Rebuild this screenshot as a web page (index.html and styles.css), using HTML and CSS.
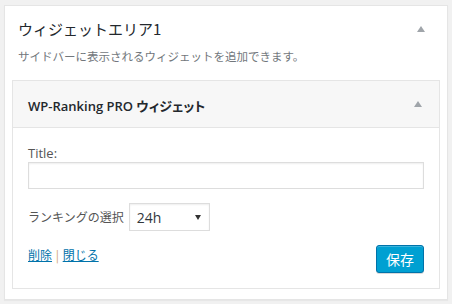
FILE: index.html
```html
<!DOCTYPE html>
<html lang="ja">
<head>
    <meta charset="UTF-8">
    <title>widget</title>
    <link rel="stylesheet" href="styles.css">
</head>
<body>
    <div class="sidebar">
        <div class="sidebar-head">
            <h2>ウィジェットエリア1</h2>
            <span class="toggle"></span>
        </div>
        <p class="sidebar-desc">サイドバーに表示されるウィジェットを追加できます。</p>

        <div class="widget">
            <div class="widget-top">
                <h3>WP-Ranking PRO ウィジェット</h3>
                <span class="toggle"></span>
            </div>
            <div class="widget-inside">
                <label class="field-label" for="title">Title:</label>
                <input type="text" id="title" class="text-input">
                <div class="select-row">
                    <span>ランキングの選択</span>
                    <div class="select">
                        <span>24h</span>
                        <span class="select-arrow"></span>
                    </div>
                </div>
                <div class="actions">
                    <div class="links">
                        <a href="#">削除</a>
                        <span class="sep">|</span>
                        <a href="#">閉じる</a>
                    </div>
                    <button class="save">保存</button>
                </div>
            </div>
        </div>
    </div>
</body>
</html>
```

FILE: styles.css
```css
body {
    margin: 0;
    padding: 5px 4px;
    background-color: #f1f1f1;
    font-family: "Open Sans", "Noto Sans CJK JP", sans-serif;
    color: #444;
    font-size: 13px;
}
.sidebar {
    background-color: #fff;
    border: 1px solid #e5e5e5;
    box-shadow: 0 1px 1px rgba(0, 0, 0, 0.04);
    padding: 11px 7px 10px;
}
.sidebar-head {
    display: flex;
    justify-content: space-between;
    align-items: center;
    padding: 0 15px 0 6px;
}
.sidebar-head h2 {
    margin: 0;
    font-size: 15px;
    line-height: 24px;
    font-weight: 400;
    color: #23282d;
    font-family: "Noto Sans CJK JP", sans-serif;
}
.toggle {
    width: 0;
    height: 0;
    border-left: 4px solid transparent;
    border-right: 4px solid transparent;
    border-bottom: 6px solid #a0a5aa;
}
.sidebar-desc {
    margin: 5px 0 14px 6px;
    line-height: 20px;
    font-size: 11.5px;
    color: #72777c;
    font-family: "Noto Sans CJK JP", sans-serif;
}
.widget {
    border: 1px solid #e5e5e5;
    background-color: #fff;
}
.widget-top {
    display: flex;
    justify-content: space-between;
    align-items: center;
    height: 46px;
    padding: 0 17px 0 15px;
    background-color: #f7f7f7;
    border-bottom: 1px solid #e5e5e5;
}
.widget-top h3 {
    margin: 3px 0 0;
    font-size: 13px;
    font-weight: 600;
    color: #23282d;
    font-feature-settings: "palt";
}
.widget-inside {
    padding: 16px 15px 15px;
}
.field-label {
    display: block;
    line-height: 18px;
    color: #555;
}
.text-input {
    display: block;
    box-sizing: border-box;
    width: 100%;
    height: 27px;
    margin: 0;
    border: 1px solid #ddd;
    box-shadow: inset 0 1px 2px rgba(0, 0, 0, 0.07);
}
.select-row {
    display: flex;
    align-items: center;
    gap: 5px;
    margin-top: 14px;
    height: 28px;
    color: #555;
    font-size: 12px;
}
.select {
    box-sizing: border-box;
    width: 81px;
    height: 28px;
    display: flex;
    align-items: center;
    justify-content: space-between;
    padding: 0 8px 0 7px;
    border: 1px solid #ddd;
    box-shadow: inset 0 1px 2px rgba(0, 0, 0, 0.07);
    color: #32373c;
    font-size: 14px;
}
.select-arrow {
    width: 0;
    height: 0;
    border-left: 3px solid transparent;
    border-right: 3px solid transparent;
    border-top: 5px solid #333;
}
.actions {
    display: flex;
    justify-content: space-between;
    align-items: flex-start;
    margin-top: 14px;
}
.links {
    line-height: 20px;
    font-size: 12px;
    font-family: "Noto Sans CJK JP", sans-serif;
}
.links a {
    color: #0073aa;
    text-decoration: underline;
}
.sep {
    color: #d4a373;
    margin: 0 1px;
}
.save {
    width: 48px;
    height: 28px;
    padding: 0;
    background-color: #00a0d2;
    border: 1px solid #0073aa;
    border-radius: 3px;
    color: #fff;
    font-size: 14px;
    font-family: "Noto Sans CJK JP", sans-serif;
    box-shadow: inset 0 1px 0 rgba(120, 200, 230, 0.5), 0 1px 0 rgba(0, 0, 0, 0.15);
    cursor: pointer;
}
```
